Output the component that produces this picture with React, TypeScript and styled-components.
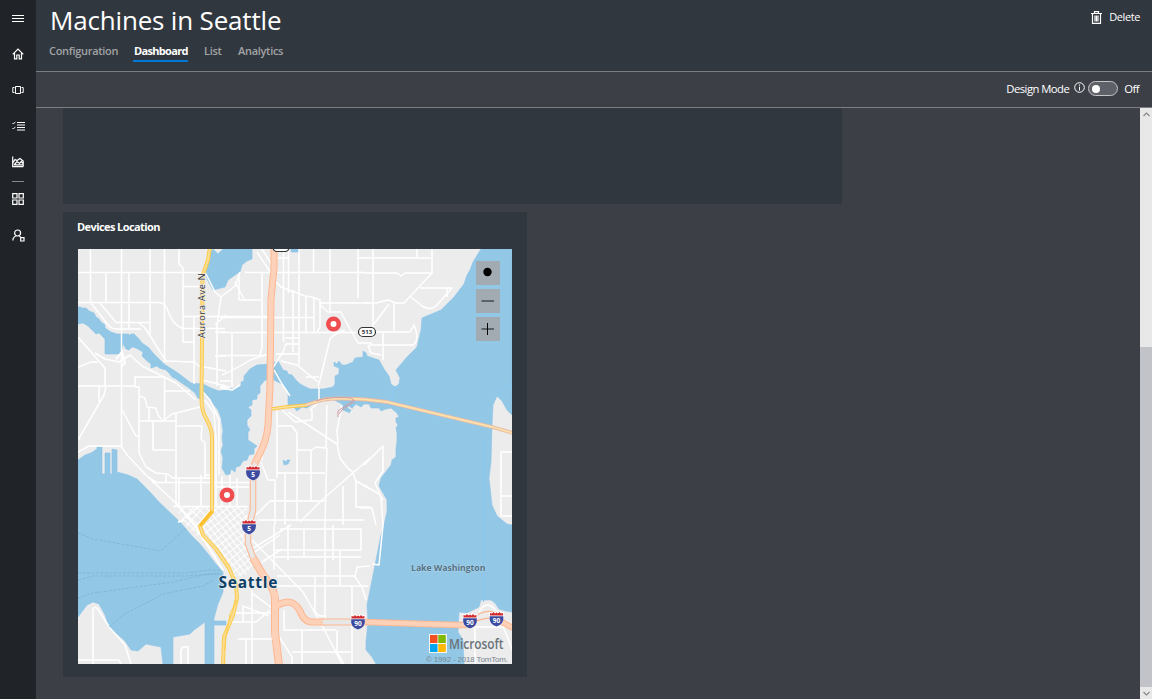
import React from 'react';
import styled, { createGlobalStyle } from 'styled-components';

const GlobalStyle = createGlobalStyle`
  * { box-sizing: border-box; }
  body { margin: 0; background: #3d3f47; overflow: hidden; }
`;

const Shell = styled.div`
  display: flex;
  height: 699px;
  width: 1152px;
  color: #fff;
  font-family: 'Open Sans', 'Noto Sans', sans-serif;
  overflow: hidden;
`;

const Nav = styled.nav`
  width: 36px;
  flex: none;
  background: #202327;
  display: flex;
  flex-direction: column;
  align-items: center;
`;

const NavItem = styled.div`
  width: 36px;
  height: 36px;
  display: flex;
  align-items: center;
  justify-content: center;
`;

const NavDivider = styled.div`
  width: 12px;
  height: 1px;
  margin: 1px 0 -1px;
  background: #85878a;
`;

const Main = styled.main`
  flex: 1;
  display: flex;
  flex-direction: column;
  min-width: 0;
`;

const Header = styled.header`
  height: 72px;
  flex: none;
  background: #31373e;
  border-bottom: 1px solid #7b7d80;
  display: flex;
  justify-content: space-between;
`;

const Heading = styled.div`
  display: flex;
  flex-direction: column;
  padding-left: 13px;
`;

const Title = styled.h1`
  margin: 1px 0 0 1px;
  font-size: 26px;
  line-height: 38px;
  height: 38px;
  font-weight: 400;
  letter-spacing: -0.18px;
  white-space: nowrap;
`;

const Tabs = styled.div`
  display: flex;
  margin-top: 3px;
`;

const Tab = styled.div<{ $active?: boolean; $width: number; $gap?: number; $track?: number }>`
  width: ${p => p.$width}px;
  margin-right: ${p => p.$gap ?? 16}px;
  height: 20px;
  padding-left: ${p => (p.$active ? 1 : 0)}px;
  font-size: 11px;
  line-height: 18px;
  font-weight: ${p => (p.$active ? 700 : 600)};
  letter-spacing: ${p => p.$track ?? -0.3}px;
  color: ${p => (p.$active ? '#fff' : '#a1a3a6')};
  border-bottom: 2px solid ${p => (p.$active ? '#0078d7' : 'transparent')};
  white-space: nowrap;
`;

const DeleteButton = styled.div`
  display: flex;
  align-items: center;
  height: 20px;
  margin: 7px 12px 0 0;
  gap: 7px;
  font-size: 11px;
  letter-spacing: -0.4px;
  span { margin-top: -2px; }
`;

const Toolbar = styled.div`
  height: 36px;
  flex: none;
  border-bottom: 1px solid #7b7d80;
  display: flex;
  align-items: center;
  justify-content: flex-end;
  padding: 0 13px 2px 0;
  font-size: 11.3px;
  letter-spacing: -0.55px;
`;

const InfoIcon = styled.svg`
  margin: 0 3px 2px 5px;
`;

const Switch = styled.div`
  width: 30px;
  height: 15px;
  border: 1px solid #c4c5c7;
  border-radius: 8px;
  background: #5f6169;
  margin-right: 6px;
  display: flex;
  align-items: center;
  padding-left: 3px;
`;

const Knob = styled.div`
  width: 8px;
  height: 8px;
  border-radius: 50%;
  background: #fff;
`;

const Body = styled.div`
  flex: 1;
  display: flex;
  min-height: 0;
`;

const Board = styled.div`
  flex: 1;
  padding-left: 27px;
  display: flex;
  flex-direction: column;
  gap: 8px;
  align-items: flex-start;
`;

const Panel = styled.section<{ $w: number; $h: number }>`
  width: ${p => p.$w}px;
  height: ${p => p.$h}px;
  background: #30373e;
  padding: 0 15px;
`;

const PanelTitle = styled.h2`
  margin: 0 0 0 -1px;
  height: 37px;
  line-height: 29px;
  font-size: 11px;
  font-weight: 700;
  letter-spacing: -0.58px;
`;

const MapFrame = styled.div`
  position: relative;
  width: 434px;
  height: 415px;
  overflow: hidden;
  svg { display: block; }
`;

const MapControls = styled.div`
  position: absolute;
  top: 12px;
  right: 12px;
  display: flex;
  flex-direction: column;
  gap: 4px;
`;

const MapButton = styled.div`
  width: 24px;
  height: 24px;
  background: #a2abb1;
  display: flex;
  align-items: center;
  justify-content: center;
`;

const ScrollBar = styled.div`
  width: 12px;
  background: #e8e8e9;
  display: flex;
  flex-direction: column;
  align-items: center;
  justify-content: space-between;
`;

const ScrollArrow = styled.div`
  width: 12px;
  height: 12px;
  display: flex;
  align-items: center;
  justify-content: center;
`;

const ScrollThumb = styled.div`
  width: 12px;
  height: 340px;
  margin-top: auto;
  background: #c2c3c9;
`;

const line = { fill: 'none', stroke: '#fff', strokeWidth: 1 };

const NavIcons = {
  menu: (
    <svg width="12" height="9" {...line}>
      <path d="M0 1.5H12M0 4.5H12M0 7.5H12" />
    </svg>
  ),
  home: (
    <svg width="12" height="12" {...line}>
      <path strokeWidth="1.2" d="M.7 6.3L6 1L11.3 6.3M2.5 5V10.8H4.8V7H7.2V10.8H9.5V5" />
    </svg>
  ),
  devices: (
    <svg width="12" height="10" {...line}>
      <path d="M3.5 1.500H8.500V8.500H3.500ZM2.500 2.500H.8V7.500H2.500M9.500 2.500H11.200V7.500H9.500" />
    </svg>
  ),
  rules: (
    <svg width="13" height="10" {...line}>
      <path d="M5 1.5H13M5 4H13M5 6.5H13M5 9H13" />
      <path strokeWidth=".9" d="M.4 2L1.4 3L3.4 .8M.4 7L1.4 8L3.4 5.8" />
    </svg>
  ),
  analytics: (
    <svg width="12" height="12" {...line}>
      <path strokeWidth="1.2" d="M.7 .5V10.7H11.3M.8 7L3 3.5L5 4.5L8 2.5L11.2 5V10.5M2 9L5 5.5L7.5 7.5L9.3 5.5L11 7.5M2 8.8H11" />
    </svg>
  ),
  dashboard: (
    <svg width="12" height="12" {...line}>
      <path strokeWidth="1.2" d="M.7 .7H5V5H.7ZM7 .7H11.3V5H7ZM.7 7H5V11.3H.7ZM7 7H11.3V11.3H7Z" />
    </svg>
  ),
  admin: (
    <svg width="13" height="13" {...line}>
      <circle cx="5.6" cy="4" r="3" strokeWidth="1.2" />
      <path strokeWidth="1.2" d="M.8 11.5C1 9 2.5 7.4 4.5 6.8M7 6.6L9 8.6M8.7 8.7H12V12H8.7Z" />
    </svg>
  ),
};

const STREETS = [
  'M90.500 249V302M121.500 249V447M106 273V302M129 273V328M150 249V334M164.500 249V362M179 249V264L183 268V342H194',
  'M78 272.500H202M78 302.500H160Q166 304 168 311Q172 324 182 328.500H225M183 286.500H200M183 316.500H270',
  'M91 303L109 326Q112 329 117 329H141M100 303L116 322.500H149M139 323L145 328L166 361L194 362L199 366L226 371',
  'M78 337L105 368V387M78 367L91 362H98M95 353L105 359L119 362L130 355L142 366L152 371L176 383L196 400M194 316V384',
  'M78 386H135V377H164.500V420M106 386L104 395L78 440M99 385V402M164 391H190',
  'M135 387H139V396L145 398L147 407L156 408L158 415L163 421M139 397V453L146 467L156 473L168 474L172 478H210',
  'M139 421H176M153 421V450H176M176 413V506M163 421L172 414L200 407M176 426H202L201 439L205 443V478M149 407V421',
  'M121 408L136 436H139M78 452L89 446H121L128 456L145 474L180 507M152 482.500H250M143 473L156 482M173 506.500H248M179 478V506M201 475V505L185 518',
  'M204 475H212M166 474V482M216 478V506M216 487H249M205 400L214 413L216 440V478M203 392L210 400L219 420V475',
  'M205 272L215 292L221 297L217 325V386M221 297L235 286L240 272M215 325L226 315M215 332H226M215 356H226M202 380L226 386M220 387H230',
  'M245 272.500H364M239 300H262M235 282L244 299M239 273V300M262 272V347L260 355M232 332V387M220 381H232M220 317.500H313M220 332.500H356M220 355.500H266',
  'M283.500 249V342M288.500 249V293M299 249V365M313.500 249V272M306 297V332M314 297V332M293 290V352M330 249V311M358 249V298M276 258H289M270 372L283 352L286 344',
  'M272 278L281 287L305 296L312 297L320 300V305L328 312H341L345 320L358 343H372M320 303H370M320 304V327L317 332M345 330Q332 335 330 339L320 380L318 386',
  'M281 361L297 365L318 382M285 338H299M285 344H299M276 354H299M306 377H319M257 252L271 273M262 249L273 267M222 375Q240 367 250 360L268 354M358 258H432M274 370L282 384L290 396',
  'M364 273H397L401 276L405 273H432M432 249V273L404 303H396L388 300L376 303H364M417 249V259M373 249V330M420 288H452L436 306Q430 311 422 306L411 297M447 288V297',
  'M374 324L389 304M394 303V332M376 332H410L414 325Q420 340 413 345H369M383 332V360M368 345L371 353L381 355M220 388L232 390L240 385',
  'M277 409V478M277 426H292L297 433V520M297 450H312L316 447L326 448L327 405M327 448L325 525M277 473H325M311 450V500M282 410L295 422L312 420V410',
  'M288 412L337 444L340 458Q348 470 352 471L356 481L370 489M342 405L337 430L338 444M370 458L322 500L300 522M256 515L270 501H325M261 462L268 480H275V525M285 473V525',
  'M343 486V525M356 481V507H370M258 520H364M222 476V506M230 475V506M237 478V506M262 445V460M319 402L310 410M319 387V402',
  'M364 465L383 446V471L375 483L381 497L383 525M364 485L379 494L383 500M360 508H372L376 525M512 452H501V516H512M501 496H512',
  'M280 529H361V550H275M275 557H361M277 576H355M277 586H368M274 525V570M288 525V560M325 525V620M340 550V586M315 576V612L320 616H325M352 586V664M304 529V557M333 525V560',
  'M252 540L303 592L322 625L342 664M383 525L379 565L372 564M370 566L357 567L355 577L362 587L366 600M238 639H272M230 613H272M252 590V664M284 630H336M302 630V664M292 652H352',
  'M337 630V652L344 664M278 635L292 657V664M250 550L291 525M253 553L280 535M262 562L282 549M284 610V630M230 622H256L270 610M243 622V606L269 616M252 593L272 608M246 639V664',
  'M93 664V612Q92 606 97 608L110 628L125 645L131 664M78 660H119L121 664M181 664V650Q182 646 187 647H188V664M470 627H512M475 627V664M503 627L508 638L512 650M479 612Q487 598 497 612',
];

const WATER = [
  'M213 249L218 254L223 249H252V259L247 261L242 265L240 272L235 275L228 280L225 287L213 290L208 281L205 273L209 254Z',
  'M291 249H299V252H291Z',
  'M78 307H81V308H86L89 311L94 313L96 317L99 319L101 322L105 325V328L111 332L117 334H129V336L131 334H134L139 339L142 343L148 347L154 354L164 364L178 373L191 383L203 384L211 388L219 391L231 389L241 386V382L244 381V376L250 369L257 365L270 364L278 361L283 370L287 371L288 374L292 375L296 380L300 384L310 389L323 389L333 387L335 384V376L339 374V368L334 366V362L337 364L339 361L342 365H346L353 362L355 358L363 357V351L366 353L367 356L379 360L384 369L389 376L391 384L395 387L399 384L400 378L396 370L407 357L417 347L421 330L422 318L441 310L454 297L464 284L467 275L470 270L473 262L481 249H512V415L507 410L502 401L497 396L493 405L492 425L491 462L489 478L492 505L497 516L507 524L512 525V612L506 611L499 609L495 603L491 600L481 600L479 607L467 613L459 612L458 632L463 640L464 664H376L372 657L366 650V642L368 622L367 605L371 585L377 555L381 535L384 525L387 512V500L379 486L381 478L391 465L392 460L396 457V448L397 442V433L396 428L398 425L396 422V418L399 417L397 413L391 408L386 409L381 411L379 408H371L369 404H364L361 407L356 404L353 407L350 413L343 410L342 404L330 398L317 401L307 408L302 407L297 411L293 406L288 405V392L282 384L274 380L265 380L260 386V393L257 395V399L252 400V405L248 407L251 410V416L247 420V425L250 430L248 432V440L257 446L254 449V454L249 455L247 460L243 461L240 466L236 467L235 472L231 469L230 474L226 475L222 468L223 458L221 451L223 445L222 437L223 431L221 418L218 410L214 405L209 398L203 393V400L198 398L195 393L189 388L176 379L172 377L169 373L166 370L159 368L157 366L151 368V364L146 360L142 356L143 352L136 348L132 347L129 350L126 349L123 344L121 354H105V339L99 333L96 334L88 326L83 323L78 324Z',
  'M78 460L85 455L91 453L97 449V447H102V474H105V453H110V474H112V449L117 450V472L128 475L137 479L143 485L150 492L159 502L181 523L191 535L199 543L209 555L216 564L223 572V592L218 604L214 618V621H226V625H214V664H205V622L194 630L190 634L173 637V664H163L161 647L146 644L138 651L131 650L125 641L109 627L105 615L99 604L93 602L87 605L78 617Z',
  'M283 460L286 462L287 460H290L288 464L284 465Z',
];

const FERRIES = 'M78 533L93 539L161 551L186 528M78 573L186 573L209 570H222M78 580L93 576L186 576L222 573M78 598L93 593L173 582L203 575L222 574M109 627L123 615L163 594L203 586L214 580';
const I5_NORTH = 'M274 247V262Q274.500 268 273 278L271 300L270 387L268 425Q267 440 259 455L254 465';
const I5_CITY = 'M255 463L253 474V510L248 530V544L254 560';
const I5_SOUTH = 'M253 558L263 575Q276 590 275 601V632L279 666';
const I90_CITY = 'M274 610Q277 603 288 602Q295 602 300 611Q304 622 312 622H325';
const AURORA = 'M210 247L208 260L202.500 276L201.500 400Q201.500 411 207 420Q212 430 212 437V512L200 526L203 535L216 549L229 568L236 585L237 598L233 615L224 637L223 666';

const CasedRoad = ({ d, width, casing, fill }: { d: string; width: number; casing: string; fill: string }) => (
  <g fill="none" strokeLinejoin="round">
    <path d={d} stroke={casing} strokeWidth={width} />
    <path d={d} stroke={fill} strokeWidth={width - 2} />
  </g>
);

const Shield = ({ x, y, n }: { x: number; y: number; n: string }) => (
  <g transform={`translate(${x} ${y})`}>
    <path d="M-7.500 -7L-5 -6.500L-3 -8L0 -6.500L3 -8L5 -6.500L7.500 -7L7 -2Q8 5 0 8Q-8 5 -7 -2Z" fill="#fff" />
    <path d="M-6.500 -3.500L-6.500 -6L-4.500 -5.500L-3 -7L-1.500 -5.500L0 -6.500L1.500 -5.500L3 -7L4.500 -5.500L6.500 -6L6.500 -3.500Z" fill="#d22c33" />
    <path d="M-6.800 -2.800H6.800Q8 4.800 0 7.600Q-8 4.800 -6.800 -2.800Z" fill="#3c4b9f" />
    <text y="3.500" textAnchor="middle" fontSize="6.500" fontWeight="700" fill="#fff">{n}</text>
  </g>
);

const Pin = ({ x, y }: { x: number; y: number }) => (
  <g>
    <circle cx={x} cy={y} r="7.500" fill="#ef4d50" />
    <circle cx={x} cy={y} r="3" fill="#fff" />
  </g>
);

const SeattleMap = () => (
  <svg width="434" height="415" viewBox="78 249 434 415" fontFamily="'Open Sans', 'Noto Sans', sans-serif">
    <defs>
      <pattern id="blocks" width="5" height="6" patternUnits="userSpaceOnUse" patternTransform="rotate(-38)">
        <path d="M0 0H5M0 0V6" stroke="#fff" strokeWidth="2" />
      </pattern>
      <pattern id="blocksNorth" width="6" height="7" patternUnits="userSpaceOnUse" patternTransform="rotate(-48)">
        <path d="M0 0H6M0 0V7" stroke="#fff" strokeWidth="1.800" />
      </pattern>
    </defs>
    <rect x="78" y="249" width="434" height="415" fill="#ececec" />
    <g fill="#93c7e6" stroke="#89c4ea" strokeWidth=".6">
      {WATER.map(d => <path key={d} d={d} />)}
    </g>
    <path d="M214 507H246L250 526L246 545L254 563L246 575L234 576L216 549L201 527L213 512Z" fill="url(#blocks)" />
    <path d="M176 506H212V511L200 525L212 550L184 524Z" fill="url(#blocksNorth)" />
    <g fill="none" stroke="#fff" strokeWidth="1.500" strokeLinejoin="round">
      {STREETS.map(d => <path key={d} d={d} />)}
    </g>
    <path d="M116 359L122 352L125 363L121 367M176 503L196 527L223 570M184 520L178 522" fill="none" stroke="#fff" strokeWidth="2.200" />
    <path d={FERRIES} fill="none" stroke="#7eb2cf" strokeWidth=".8" strokeDasharray="3 1.500" />
    <path d="M483.500 437V602M391 405L395 386M498 396Q498 389 512 383" fill="none" stroke="#88c7f4" strokeWidth="1" />
    <CasedRoad d={AURORA} width={4} casing="#fdcc48" fill="#fbdd95" />
    <path d="M212 511L200 526" stroke="#fcc02e" strokeWidth="3" />
    <path d="M237 600L230 614L226 637L225 650" fill="none" stroke="#fdcc48" strokeWidth="1" />
    <CasedRoad d={I5_NORTH} width={7} casing="#fdb892" fill="#fdd2ba" />
    <CasedRoad d={I5_CITY} width={6.500} casing="#fcb58e" fill="#e9e7e6" />
    <CasedRoad d={I5_SOUTH} width={8} casing="#fdb892" fill="#fdd0b8" />
    <CasedRoad d={I90_CITY} width={7} casing="#fdb892" fill="#fdd0b8" />
    <CasedRoad d="M323 622H358" width={7} casing="#fdb892" fill="#e9e7e6" />
    <CasedRoad d="M364 622L457 625H470" width={6.500} casing="#fdb892" fill="#fdd0b8" />
    <path d="M275 592V640" stroke="#fdd0b8" strokeWidth="6" />
    <path d="M472 619Q484 608 498 613M472 623Q485 616 500 619" fill="none" stroke="#fcb58e" strokeWidth="1.200" />
    <CasedRoad d="M500 621L513 628" width={6} casing="#fdb892" fill="#fdd0b8" />
    <CasedRoad d="M272 409L285 407L308 405" width={3.600} casing="#fac846" fill="#fbe0a0" />
    <CasedRoad d="M306 405L322 400Q336 397 370 400L387 402L492 427L513 433" width={3.800} casing="#e8bba4" fill="#fee0ac" />
    <path d="M316 401Q330 396 351 398L354 400L338 411V417M355 401L342 410L339 414" fill="none" stroke="#cf9fa6" strokeWidth="1" />
    <path d="M348 407L353 410L350 413" fill="none" stroke="#ececec" strokeWidth="1.500" />

    <g fill="#fff" stroke="#333" strokeWidth="1.200">
      <rect x="273" y="243" width="16" height="8.500" rx="4" />
      <rect x="358.500" y="327.500" width="17" height="9" rx="4.500" />
    </g>
    <text x="367" y="334.400" textAnchor="middle" fontSize="6" fontWeight="700" fill="#333" textLength="10.500">513</text>
    <text transform="translate(204.500 338) rotate(-90)" fontSize="9" fill="#333" stroke="#ececec" strokeWidth="1.500" paintOrder="stroke" textLength="64.500">Aurora Ave N</text>

    <Shield x={253} y={473} n="5" />
    <Shield x={249} y={527} n="5" />
    <Shield x={358} y={622} n="90" />
    <Shield x={470} y={621} n="90" />
    <Shield x={496.500} y={619} n="90" />
    <Pin x={333.500} y={324} />
    <Pin x={227} y={495} />

    <text x="218.500" y="588" fontSize="15.500" fontWeight="700" fill="#0d3f66" stroke="#eef1f3" strokeWidth="1.200" paintOrder="stroke" textLength="59">Seattle</text>
    <text x="411" y="571" fontSize="8.800" fontWeight="700" fill="#587485" stroke="#a9d2ea" strokeWidth="1" paintOrder="stroke" textLength="74.500">Lake Washington</text>

    <rect x="429" y="634" width="18" height="19" fill="#f4f4f4" />
    <rect x="430" y="635" width="7.500" height="8" fill="#f25022" />
    <rect x="438.300" y="635" width="7.500" height="8" fill="#7fba00" />
    <rect x="430" y="644" width="7.500" height="8" fill="#00a4ef" />
    <rect x="438.300" y="644" width="7.500" height="8" fill="#ffb900" />
    <text x="449" y="649" fontSize="14" fontWeight="600" fill="#69747b" textLength="54.500" lengthAdjust="spacingAndGlyphs">Microsoft</text>
    <text x="426" y="662" fontSize="8" fontFamily="'Liberation Sans', sans-serif" fill="#76868f" textLength="82">© 1992 - 2018 TomTom.</text>
  </svg>
);

export default function App() {
  return (
    <>
      <GlobalStyle />
      <Shell>
        <Nav>
          <NavItem>{NavIcons.menu}</NavItem>
          <NavItem>{NavIcons.home}</NavItem>
          <NavItem>{NavIcons.devices}</NavItem>
          <NavItem>{NavIcons.rules}</NavItem>
          <NavItem>{NavIcons.analytics}</NavItem>
          <NavDivider />
          <NavItem>{NavIcons.dashboard}</NavItem>
          <NavItem>{NavIcons.admin}</NavItem>
        </Nav>
        <Main>
          <Header>
            <Heading>
              <Title>Machines in Seattle</Title>
              <Tabs>
                <Tab $width={69} $gap={15}>Configuration</Tab>
                <Tab $width={55} $active $track={-0.68}>Dashboard</Tab>
                <Tab $width={18}>List</Tab>
                <Tab $width={46}>Analytics</Tab>
              </Tabs>
            </Heading>
            <DeleteButton>
              <svg width="11" height="13" {...line}>
                <path strokeWidth="1.2" d="M0 2.500H11M3.500 2V.7H7.500V2M1.500 3V12.300H9.500V3M4 4.500V10.500M5.500 4.500V10.500M7 4.500V10.500" />
              </svg>
              <span>Delete</span>
            </DeleteButton>
          </Header>
          <Toolbar>
            <span>Design Mode</span>
            <InfoIcon width="11" height="11" {...line}>
              <circle cx="5.500" cy="5.500" r="4.800" />
              <path d="M5.500 2.500V3.700M5.500 4.700V8.500" />
            </InfoIcon>
            <Switch><Knob /></Switch>
            <span>Off</span>
          </Toolbar>
          <Body>
            <Board>
              <Panel $w={779} $h={96} />
              <Panel $w={464} $h={465}>
                <PanelTitle>Devices Location</PanelTitle>
                <MapFrame>
                  <SeattleMap />
                  <MapControls>
                    <MapButton>
                      <svg width="14" height="14"><circle cx="6.500" cy="6" r="4.200" fill="#000" /></svg>
                    </MapButton>
                    <MapButton>
                      <svg width="14" height="14"><path d="M.5 7H13" stroke="#444b50" strokeWidth="1.500" /></svg>
                    </MapButton>
                    <MapButton>
                      <svg width="14" height="14"><path d="M.5 7H13" stroke="#444b50" strokeWidth="1.500" /><path d="M6.500 1V13" stroke="#000" /></svg>
                    </MapButton>
                  </MapControls>
                </MapFrame>
              </Panel>
            </Board>
            <ScrollBar>
              <ScrollArrow>
                <svg width="7" height="5"><path d="M.5 4L3.500 1L6.500 4" fill="none" stroke="#85878b" strokeWidth="1.200" /></svg>
              </ScrollArrow>
              <ScrollThumb />
              <ScrollArrow>
                <svg width="7" height="5"><path d="M.5 1L3.500 4L6.500 1" fill="none" stroke="#85878b" strokeWidth="1.200" /></svg>
              </ScrollArrow>
            </ScrollBar>
          </Body>
        </Main>
      </Shell>
    </>
  );
}
